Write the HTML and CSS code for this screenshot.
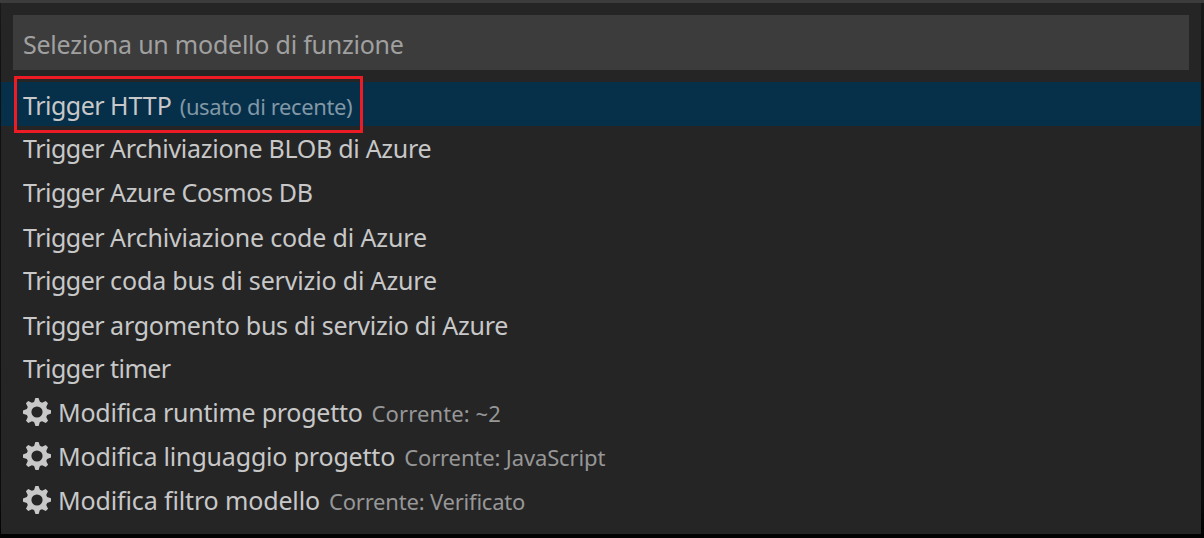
FILE: index.html
```html
<!DOCTYPE html>
<html lang="it">
<head>
<meta charset="utf-8">
<title>Seleziona un modello di funzione</title>
<link rel="stylesheet" href="styles.css">
</head>
<body>
<svg class="defs" aria-hidden="true"><symbol id="gear" viewBox="0 1 14 14"><path fill-rule="evenodd" d="M14 8.77v-1.6l-1.94-.64-.45-1.09.88-1.84-1.13-1.13-1.81.91-1.09-.45-.69-1.92h-1.6l-.63 1.94-1.11.45-1.84-.88-1.13 1.13.91 1.81-.45 1.09L0 7.23v1.59l1.94.64.45 1.09-.88 1.84 1.13 1.13 1.81-.91 1.09.45.69 1.92h1.59l.63-1.94 1.11-.45 1.84.88 1.13-1.13-.92-1.81.47-1.09L14 8.75v.02zM7 10.8a2.8 2.8 0 1 1 0-5.6 2.8 2.8 0 0 1 0 5.6z"/></symbol></svg>
<main class="picker">
  <div class="search"><span class="placeholder">Seleziona un modello di funzione</span></div>
  <div class="list">
    <div class="row low selected"><span class="label http"><span class="kind">Trigger </span>HTTP</span><span class="detail recent">(usato di recente)</span><div class="highlight"></div></div>
    <div class="row"><span class="label blob"><span class="kind">Trigger </span>Archiviazione BLOB di Azure</span></div>
    <div class="row"><span class="label cosmos"><span class="kind">Trigger </span>Azure Cosmos DB</span></div>
    <div class="row low"><span class="label queue"><span class="kind">Trigger </span>Archiviazione code di Azure</span></div>
    <div class="row"><span class="label busq"><span class="kind">Trigger </span>coda bus di servizio di Azure</span></div>
    <div class="row low"><span class="label topic"><span class="kind">Trigger </span>argomento bus di servizio di Azure</span></div>
    <div class="row"><span class="label timer"><span class="kind">Trigger </span>timer</span></div>
    <div class="row"><svg class="gear"><use href="#gear"/></svg><span class="label runtime">Modifica runtime progetto</span><span class="detail d1">Corrente: ~2</span></div>
    <div class="row"><svg class="gear"><use href="#gear"/></svg><span class="label lang">Modifica linguaggio progetto</span><span class="detail d2">Corrente: JavaScript</span></div>
    <div class="row"><svg class="gear"><use href="#gear"/></svg><span class="label filter">Modifica filtro modello</span><span class="detail d3">Corrente: Verificato</span></div>
  </div>
</main>
</body>
</html>
```
FILE: styles.css
```css
* { box-sizing: border-box; }
body {
  margin: 0;
  height: 538px;
  overflow: hidden;
  padding: 3px 3px 4px 1px;
  background: linear-gradient(#3c3c3c 3px, transparent 3px), linear-gradient(#1a1a1a, #111 60px, #0c0c0c 500px, #020202 534px);
  font-family: "Noto Sans", "Open Sans", sans-serif;
}
.defs { display: none; }
.picker { height: 531px; padding-top: 12px; background: #252526; }
.search {
  height: 55px;
  margin: 0 12px;
  padding-left: 10px;
  display: flex;
  align-items: center;
  background: #3c3c3c;
}
.placeholder { font-size: 25px; line-height: 34px; padding-top: 2px; color: #a0a0a0; white-space: nowrap; letter-spacing: -0.23px; }
.list { margin-top: 12px; }
.row {
  position: relative;
  height: 44px;
  padding-left: 22px;
  display: flex;
  align-items: baseline;
  line-height: 44px;
  white-space: nowrap;
}
.low { line-height: 46px; }
.selected { background: #062f4a; }
.label { font-size: 25px; color: #c8c8c8; }
.label .kind { letter-spacing: -0.5px; }
.http { letter-spacing: -0.1px; }
.blob { letter-spacing: -0.28px; }
.cosmos { letter-spacing: -0.37px; }
.queue { letter-spacing: -0.15px; }
.busq { letter-spacing: -0.16px; }
.topic { letter-spacing: -0.25px; }
.timer { letter-spacing: -0.6px; }
.runtime { letter-spacing: -0.25px; }
.lang { letter-spacing: -0.18px; }
.filter { letter-spacing: -0.14px; }
.detail { font-size: 22px; color: #979797; margin-left: 9px; }
.recent { color: #8198a6; letter-spacing: -0.39px; margin-left: 8px; }
.d1 { letter-spacing: 0.1px; }
.d2 { letter-spacing: -0.13px; }
.d3 { letter-spacing: -0.2px; }
.gear { width: 28px; height: 28px; margin-right: 7px; align-self: flex-start; margin-top: 8px; fill: #c8c8c8; flex: none; }
.highlight { position: absolute; left: 13px; top: -6px; width: 349px; height: 57px; border: 3px solid #ed1c24; z-index: 1; }
```
